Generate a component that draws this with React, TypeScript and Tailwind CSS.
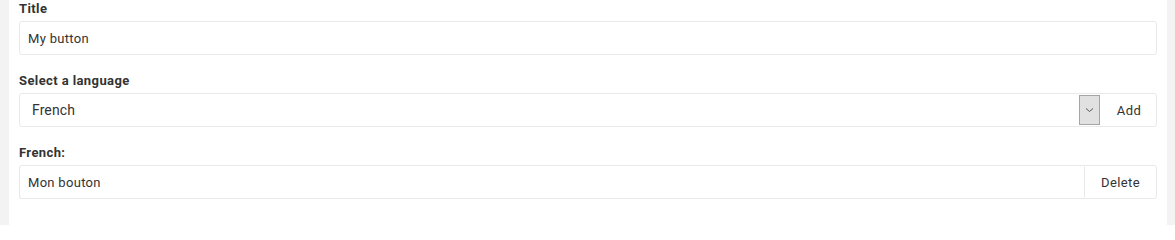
import React from "react";

const font = { fontFamily: '"Roboto", "Liberation Sans", sans-serif' };

export default function App() {
  return (
    <div className="flex h-[225px] w-[1175px] bg-[#f3f3f3] pl-[9px] pr-[8px] text-[#333]" style={font}>
      <div className="flex flex-1 flex-col bg-white px-[10px]">
        <label className="block h-[18px] text-[13px] font-bold leading-[18px] tracking-[0.4px] text-[#333]">Title</label>
        <div className="mt-[3px] flex h-[34px] items-center rounded-[3px] border border-[#e9e9e9] px-[8px] pt-[1px] text-[13px] tracking-[0.3px]">
          My button
        </div>

        <label className="mt-[17px] block h-[18px] text-[13px] font-bold leading-[18px] tracking-[0.4px]">Select a language</label>
        <div className="mt-[3px] flex h-[34px] rounded-[3px] border border-[#e9e9e9]">
          <div className="flex flex-1 items-center pl-[12px] pt-[1px] text-[14px] tracking-[0.1px]">French</div>
          <div className="my-[1px] flex w-[21px] items-center justify-center border border-[#a5a5a5] bg-[#e1e1e1]">
            <svg width="9" height="6" viewBox="0 0 9 6" fill="none">
              <path d="M1 1.5 L4.5 4.5 L8 1.5" stroke="#555" strokeWidth="1" />
            </svg>
          </div>
          <div className="flex w-[56px] items-center justify-center pl-[2px] pt-[1px] text-[13px] tracking-[0.4px]">Add</div>
        </div>

        <label className="mt-[17px] block h-[18px] text-[13px] font-bold leading-[18px] tracking-[0.4px]">French:</label>
        <div className="mt-[3px] flex h-[34px]">
          <div className="flex flex-1 items-center rounded-l-[3px] border border-r-0 border-[#e9e9e9] px-[8px] pt-[1px] text-[13px] tracking-[0.3px]">
            Mon bouton
          </div>
          <div className="flex w-[73px] items-center justify-center rounded-r-[3px] border border-[#e9e9e9] pt-[1px] text-[13px] tracking-[0.4px]">
            Delete
          </div>
        </div>
      </div>
    </div>
  );
}
